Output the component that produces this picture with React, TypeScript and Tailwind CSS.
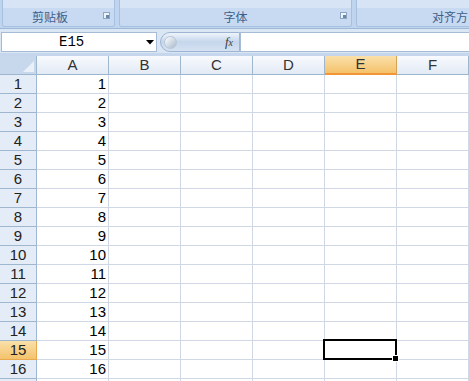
import React from "react";

const cols = ["A", "B", "C", "D", "E", "F"];
const rows = Array.from({ length: 17 }, (_, i) => i + 1);

function Launcher() {
  return (
    <span className="relative block w-[7px] h-[7px] border border-[#8ba7c8] bg-[#eef3fa]">
      <span className="absolute right-0 bottom-0 w-[3px] h-[3px] bg-[#6a86a8]" />
    </span>
  );
}

export default function App() {
  return (
    <div className="w-[469px] h-[381px] overflow-hidden bg-white relative" style={{ fontFamily: '"Liberation Sans", "Noto Sans CJK SC", sans-serif' }}>
      {/* Ribbon group labels */}
      <div className="flex h-[28px] bg-[#bfd4ee] gap-[4px] pl-[2px] pb-[1px]">
        <div className="w-[113px] flex flex-col rounded-b-[3px] border border-t-0 border-[#a7c0de] overflow-hidden">
          <div className="h-[9px] bg-[#d6e4f5]" />
          <div className="flex-1 bg-[#c7daf1] flex items-center relative">
            <span className="ml-[29px] text-[12px] text-[#3e5f8a]" style={{ fontFamily: '"Noto Sans CJK SC", sans-serif' }}>剪贴板</span>
            <span className="absolute right-[4px] top-[4px]"><Launcher /></span>
          </div>
        </div>
        <div className="w-[233px] flex flex-col rounded-b-[3px] border border-t-0 border-[#a7c0de] overflow-hidden">
          <div className="h-[9px] bg-[#d6e4f5]" />
          <div className="flex-1 bg-[#c7daf1] flex items-center justify-center relative">
            <span className="text-[12px] text-[#3e5f8a]" style={{ fontFamily: '"Noto Sans CJK SC", sans-serif' }}>字体</span>
            <span className="absolute right-[4px] top-[4px]"><Launcher /></span>
          </div>
        </div>
        <div className="flex-1 flex flex-col rounded-bl-[3px] border border-t-0 border-r-0 border-[#a7c0de] overflow-hidden">
          <div className="h-[9px] bg-[#d6e4f5]" />
          <div className="flex-1 bg-[#c7daf1] flex items-center justify-end">
            <span className="text-[12px] text-[#3e5f8a] mr-[1px]" style={{ fontFamily: '"Noto Sans CJK SC", sans-serif' }}>对齐方</span>
          </div>
        </div>
      </div>

      {/* Formula bar */}
      <div className="h-[28px] bg-[#dbe6f4] border-t border-[#9fb8d8] flex items-start pt-[3px] pl-[1px] border-b-[3px] border-b-[#c6d7ed]">
        <div className="w-[156px] h-[20px] bg-white border border-[#a6bcd6] flex items-center relative">
          <span className="absolute left-[57px] text-[14px] text-black" style={{ fontFamily: '"Liberation Mono", "DejaVu Sans Mono", monospace' }}>E15</span>
          <svg className="absolute left-[144px] top-[7px]" width="8" height="5" viewBox="0 0 8 5"><path d="M0 0H8L4 4.5Z" fill="#000" /></svg>
        </div>
        <div className="w-[80px] h-[20px] ml-[3px] rounded-l-full bg-gradient-to-b from-[#eef4fb] via-[#c5d6ec] to-[#d6e2f2] border border-[#9db5d3] flex items-center relative">
          <span className="absolute left-[3px] w-[13px] h-[13px] rounded-full bg-gradient-to-br from-white to-[#a9b9cc] border border-[#b9c6d5]" />
          <span className="absolute right-[6px] text-[13px] italic text-[#3c3c3c]" style={{ fontFamily: '"Liberation Serif", serif' }}>f<span className="text-[10px]">x</span></span>
        </div>
        <div className="flex-1 h-[20px] bg-white border border-[#a6bcd6] border-r-0" />
      </div>

      {/* Grid */}
      <div className="grid grid-cols-[37px_repeat(6,72px)]">
        <div className="h-[19px] bg-[#c8d8ec] border-r border-b border-[#9eb6ce] relative">
          <span className="absolute right-[2px] bottom-[2px] w-0 h-0 border-l-[11px] border-l-transparent border-b-[11px] border-b-[#e9f0f8]" />
        </div>
        {cols.map((c) =>
          c === "E" ? (
            <div key={c} className="h-[19px] bg-gradient-to-b from-[#fae0a9] to-[#f4c26a] border-r border-[#d6a455] border-b-2 border-b-[#f29536] flex items-center justify-center text-[15px] text-[#333]">
              {c}
            </div>
          ) : (
            <div key={c} className="h-[19px] bg-gradient-to-b from-[#f8fafd] to-[#e2eaf5] border-r border-b border-[#9eb6ce] flex items-center justify-center text-[15px] text-[#333]">
              {c}
            </div>
          )
        )}
        {rows.map((r) => (
          <React.Fragment key={r}>
            <div className={`h-[19px] border-r border-b flex items-center justify-center text-[15px] text-[#222] ${r === 15 ? "bg-gradient-to-b from-[#fae0a9] to-[#f4c26a] border-[#e7a84f]" : "bg-[#e4ecf7] border-[#9eb6ce]"}`}>
              {r <= 16 ? r : ""}
            </div>
            {cols.map((c) => (
              <div key={c} className="h-[19px] border-r border-b border-[#d0d7e5] flex items-center justify-end pr-[2px] text-[15px] text-black relative">
                {c === "A" && r <= 16 ? r : ""}
                {c === "E" && r === 15 && (
                  <div className="absolute left-[-2px] top-[-2px] w-[74px] h-[21px] border-2 border-black z-10">
                    <span className="absolute right-[-4px] bottom-[-4px] w-[5px] h-[5px] bg-black border border-white box-content" />
                  </div>
                )}
              </div>
            ))}
          </React.Fragment>
        ))}
      </div>
    </div>
  );
}
